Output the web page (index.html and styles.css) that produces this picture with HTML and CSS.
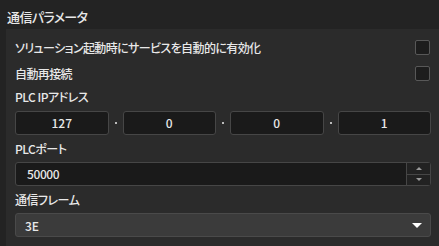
FILE: index.html
```html
<!DOCTYPE html>
<html lang="ja">
<head>
    <meta charset="UTF-8">
    <title>通信パラメータ</title>
    <link rel="stylesheet" href="styles.css">
</head>
<body>
    <div class="section-title">通信パラメータ</div>
    <div class="panel">
        <!-- チェックボックス -->
        <div class="check-row">
            <span>ソリューション起動時にサービスを自動的に有効化</span>
            <span class="checkbox"></span>
        </div>
        <div class="check-row">
            <span>自動再接続</span>
            <span class="checkbox"></span>
        </div>

        <!-- IPアドレス -->
        <div class="field-label">PLC IPアドレス</div>
        <div class="ip-row">
            <div class="ip-box">127</div>
            <div class="ip-dot"><span></span></div>
            <div class="ip-box">0</div>
            <div class="ip-dot"><span></span></div>
            <div class="ip-box">0</div>
            <div class="ip-dot"><span></span></div>
            <div class="ip-box">1</div>
        </div>

        <!-- ポート -->
        <div class="field-label">PLCポート</div>
        <div class="number-input">
            <div class="number-value">50000</div>
            <div class="spinner">
                <div class="spin-btn"><span class="tri-up"></span></div>
                <div class="spin-btn"><span class="tri-down"></span></div>
            </div>
        </div>

        <!-- フレーム -->
        <div class="field-label">通信フレーム</div>
        <div class="select-box">
            <span>3E</span>
            <span class="select-arrow"></span>
        </div>
    </div>
</body>
</html>
```

FILE: styles.css
```css
body {
    margin: 0;
    background-color: #232323;
    color: #e8e8e8;
    font-family: "Noto Sans CJK JP", "Noto Sans", sans-serif;
    font-size: 12px;
    font-weight: 500;
    font-feature-settings: "palt";
    width: 439px;
    height: 246px;
    overflow: hidden;
}

.section-title {
    height: 29px;
    line-height: 34px;
    padding-left: 7px;
    font-size: 13px;
    letter-spacing: -0.6px;
    box-sizing: border-box;
}

.panel {
    margin-left: 6px;
    background-color: #2b2b2b;
    padding: 5px 8px 9px 9px;
}

.check-row {
    height: 26px;
    display: flex;
    align-items: center;
    justify-content: space-between;
    letter-spacing: -0.6px;
}

.checkbox {
    width: 13px;
    height: 13px;
    border: 1px solid #585858;
    border-radius: 2px;
    background-color: #1d1d1d;
    margin-right: 1px;
}

.field-label {
    height: 22px;
    line-height: 22px;
    letter-spacing: -0.5px;
}

.ip-row {
    display: flex;
    margin: 3px 0 3px;
}

.ip-box {
    flex: 1;
    height: 24px;
    line-height: 22px;
    box-sizing: border-box;
    border: 1px solid #464646;
    border-radius: 3px;
    background-color: #1a1a1a;
    text-align: center;
}

.ip-dot {
    width: 14px;
    display: flex;
    align-items: center;
    justify-content: center;
}

.ip-dot span {
    width: 2px;
    height: 2px;
    background-color: #bbbbbb;
}

.number-input {
    display: flex;
    height: 24px;
    margin: 2px 0 3px;
    box-sizing: border-box;
    border: 1px solid #464646;
    border-radius: 3px;
    background-color: #1a1a1a;
}

.number-value {
    flex: 1;
    line-height: 22px;
    padding-left: 11px;
    letter-spacing: -0.4px;
}

.spinner {
    width: 23px;
    border-left: 1px solid #464646;
    display: flex;
    flex-direction: column;
    background-color: #222222;
}

.spin-btn {
    flex: 1;
    display: flex;
    align-items: center;
    justify-content: center;
}

.spin-btn + .spin-btn {
    border-top: 1px solid #464646;
}

.tri-up,
.tri-down {
    width: 0;
    height: 0;
    border-left: 3px solid transparent;
    border-right: 3px solid transparent;
}

.tri-up {
    border-bottom: 3px solid #9a9a9a;
}

.tri-down {
    border-top: 3px solid #9a9a9a;
}

.select-box {
    display: flex;
    align-items: center;
    justify-content: space-between;
    height: 24px;
    margin-top: 2px;
    padding: 0 8px 0 9px;
    box-sizing: border-box;
    border: 1px solid #4a4a4a;
    border-radius: 3px;
    background-color: #3b3b3b;
}

.select-arrow {
    width: 0;
    height: 0;
    border-left: 5px solid transparent;
    border-right: 5px solid transparent;
    border-top: 5px solid #ffffff;
}
```
